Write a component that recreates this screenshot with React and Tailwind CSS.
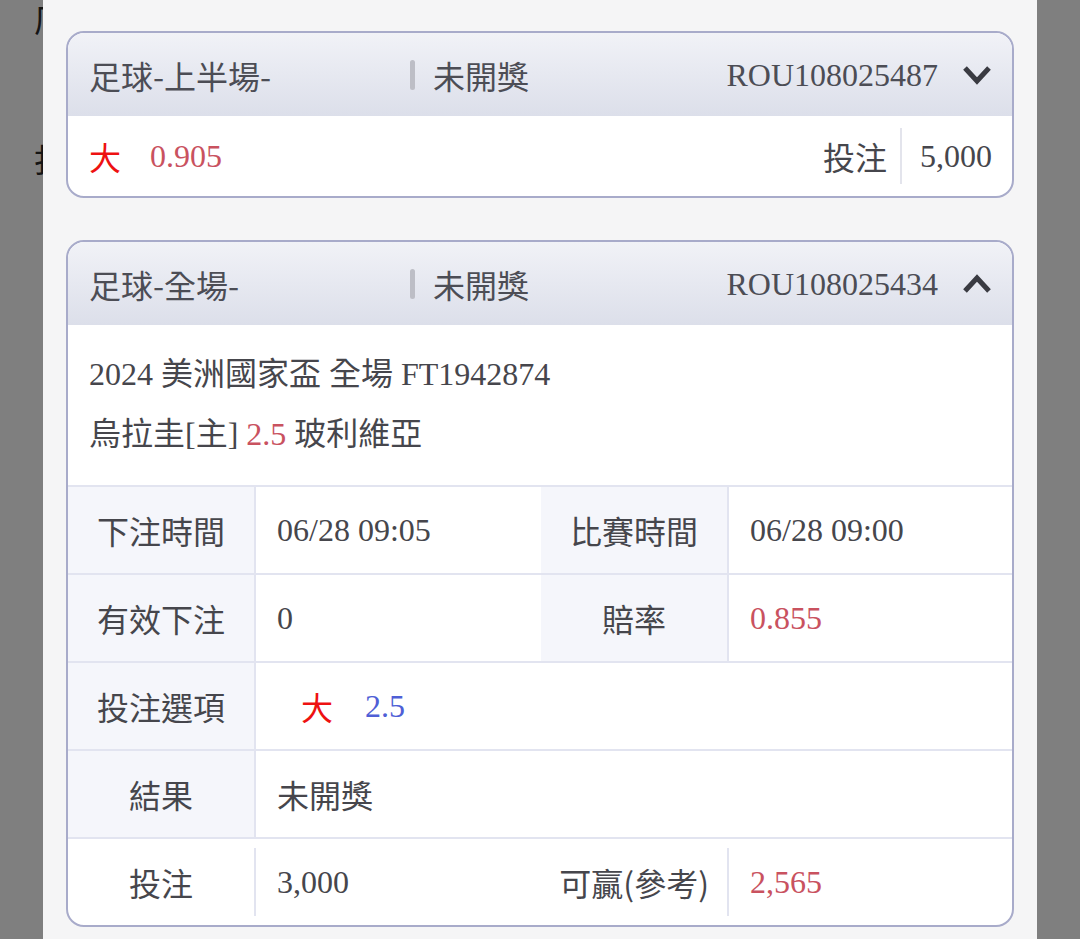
import React from "react";

const SANS = "font-['Noto_Sans_CJK_TC','Noto_Sans',sans-serif]";
const SERIF = "font-['Liberation_Serif','Noto_Sans_CJK_TC',serif]";

function Chevron({ up }) {
  return (
    <svg width="30" height="22" viewBox="0 0 30 22" className="shrink-0">
      <polyline
        points={up ? "3,18 15,5 27,18" : "3,4 15,17 27,4"}
        fill="none"
        stroke="#3a3b42"
        strokeWidth="5"
        strokeLinejoin="miter"
      />
    </svg>
  );
}

function CardHeader({ title, order, open }) {
  return (
    <div className="flex items-center h-[83px] pl-[21px] pr-[20px] bg-linear-to-b from-[#f1f2f7] to-[#dcdfea] rounded-t-[16px]">
      <div className={`w-[321px] text-[32px] text-[#4c4d55] ${SANS}`}>{title}</div>
      <div className="w-[5px] h-[30px] bg-[#bdbec6] rounded-sm" />
      <div className={`ml-[18px] text-[32px] text-[#4c4d55] ${SANS}`}>未開獎</div>
      <div className="flex-1" />
      <div className={`text-[32px] text-[#4c4d55] ${SERIF}`}>{order}</div>
      <div className="ml-[24px]">
        <Chevron up={open} />
      </div>
    </div>
  );
}

function Label({ children }) {
  return (
    <div className={`flex items-center justify-center bg-[#f5f6fb] border-r-2 border-[#e2e4f0] text-[32px] text-[#46464c] ${SANS}`}>
      {children}
    </div>
  );
}

function Value({ children, className = "" }) {
  return (
    <div className={`flex items-center pl-[21px] text-[32px] text-[#46464c] ${SERIF} ${className}`}>
      {children}
    </div>
  );
}

export default function App() {
  return (
    <div className="flex h-[939px] w-[1080px] overflow-hidden bg-[#7f7f7f]">
      {/* dimmed page behind the sheet */}
      <div className="relative w-[43px] shrink-0 overflow-hidden">
        <span className={`absolute left-[34px] top-[-6px] text-[32px] text-[#151515] ${SANS}`}>厂</span>
        <span className={`absolute left-[33px] top-[134px] text-[32px] text-[#151515] ${SANS}`}>扌</span>
      </div>

      <div className="flex-1 bg-[#f5f5f6] pt-[31px] px-[23px] flex flex-col gap-[42px]">
        {/* card 1 */}
        <div className="rounded-[18px] border-2 border-[#a8abca] bg-white overflow-hidden">
          <CardHeader title="足球-上半場-" order="ROU108025487" />
          <div className="flex items-center h-[80px] pl-[21px] pr-[20px]">
            <span className={`text-[32px] text-[#ee1111] ${SANS}`}>大</span>
            <span className={`ml-[29px] text-[32px] text-[#c9525f] ${SERIF}`}>0.905</span>
            <div className="flex-1" />
            <span className={`text-[32px] text-[#46464c] ${SANS}`}>投注</span>
            <div className="mx-[13px] w-[2px] h-[56px] bg-[#e3e4ec]" />
            <span className={`ml-[5px] text-[32px] text-[#46464c] ${SERIF}`}>5,000</span>
          </div>
        </div>

        {/* card 2 */}
        <div className="rounded-[18px] border-2 border-[#a8abca] bg-white overflow-hidden">
          <CardHeader title="足球-全場-" order="ROU108025434" open />
          <div className={`pt-[19px] pb-[21px] pl-[21px] text-[32px] leading-[60px] text-[#46464c] ${SERIF}`}>
            <div>2024 美洲國家盃 全場 FT1942874</div>
            <div>
              烏拉圭[主] <span className="text-[#c9525f]">2.5</span> 玻利維亞
            </div>
          </div>

          <div className="grid grid-cols-[188px_285px_188px_1fr] border-t-2 border-[#e2e4f0]">
            <div className="col-span-4 grid grid-cols-subgrid h-[88px] border-b-2 border-[#e2e4f0]">
              <Label>下注時間</Label>
              <Value>06/28 09:05</Value>
              <Label>比賽時間</Label>
              <Value>06/28 09:00</Value>
            </div>
            <div className="col-span-4 grid grid-cols-subgrid h-[88px] border-b-2 border-[#e2e4f0]">
              <Label>有效下注</Label>
              <Value>0</Value>
              <Label>賠率</Label>
              <Value className="text-[#c9525f]">0.855</Value>
            </div>
            <div className="col-span-4 grid grid-cols-subgrid h-[88px] border-b-2 border-[#e2e4f0]">
              <Label>投注選項</Label>
              <div className="col-span-3 flex items-center pl-[45px] text-[32px]">
                <span className={`text-[#ee1111] ${SANS}`}>大</span>
                <span className={`ml-[32px] text-[#4f5fd6] ${SERIF}`}>2.5</span>
              </div>
            </div>
            <div className="col-span-4 grid grid-cols-subgrid h-[88px] border-b-2 border-[#e2e4f0]">
              <Label>結果</Label>
              <div className={`col-span-3 flex items-center pl-[21px] text-[32px] text-[#46464c] ${SANS}`}>
                未開獎
              </div>
            </div>
            <div className="col-span-4 grid grid-cols-subgrid h-[86px]">
              <div className={`my-[9px] flex items-center justify-center border-r-2 border-[#e2e4f0] text-[32px] text-[#46464c] ${SANS}`}>
                投注
              </div>
              <div className="col-span-2 my-[9px] flex items-center justify-between pl-[21px] pr-[18px] border-r-2 border-[#e2e4f0] text-[32px] text-[#46464c]">
                <span className={SERIF}>3,000</span>
                <span className={SANS}>可贏(參考)</span>
              </div>
              <Value className="text-[#c9525f]">2,565</Value>
            </div>
          </div>
        </div>
      </div>

      <div className="w-[43px] shrink-0" />
    </div>
  );
}
